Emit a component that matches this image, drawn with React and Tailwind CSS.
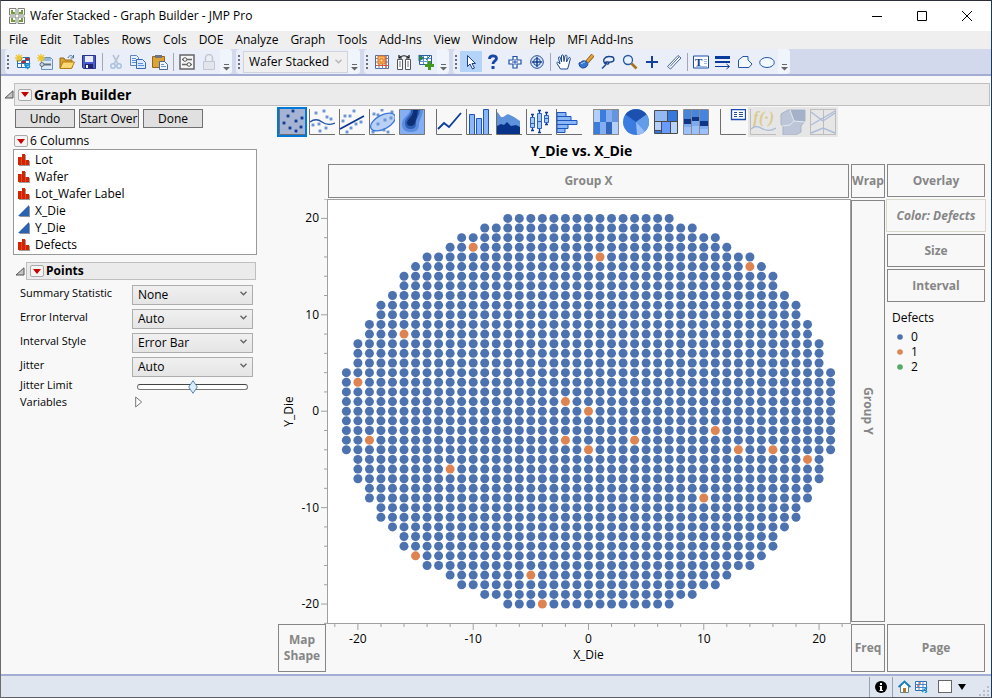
import React, { useState } from 'react';

const menus = ['File', 'Edit', 'Tables', 'Rows', 'Cols', 'DOE', 'Analyze', 'Graph', 'Tools', 'Add-Ins', 'View', 'Window', 'Help', 'MFI Add-Ins'];

const columns = [
  { name: 'Lot', type: 'nominal' },
  { name: 'Wafer', type: 'nominal' },
  { name: 'Lot_Wafer Label', type: 'nominal' },
  { name: 'X_Die', type: 'continuous' },
  { name: 'Y_Die', type: 'continuous' },
  { name: 'Defects', type: 'nominal' },
];

const pointOptions = [
  { id: 'summary', label: 'Summary Statistic', values: ['None', 'Mean', 'Median'] },
  { id: 'error', label: 'Error Interval', values: ['Auto', 'None', 'Range'] },
  { id: 'style', label: 'Interval Style', values: ['Error Bar', 'Band'] },
  { id: 'jitter', label: 'Jitter', values: ['Auto', 'None'] },
];

const legend = [
  { value: '0', color: '#4c72b0' },
  { value: '1', color: '#dd8452' },
  { value: '2', color: '#55a868' },
];

// Highest die row for each |X_Die|, the wafer is symmetric
const extents = [20, 20, 20, 20, 20, 20, 20, 20, 19, 19, 18, 18, 17, 16, 16, 15, 14, 12, 11, 9, 7, 4];

const defects = new Set([
  '-10,17', '1,16', '14,15', '-16,8', '-20,3', '-2,1', '0,0', '-19,-3', '-2,-3', '0,-4',
  '4,-3', '11,-2', '13,-4', '16,-4', '19,-5', '-12,-6', '10,-9', '-15,-15', '-5,-17', '-4,-20',
]);

const dies = [];
for (let x = -21; x <= 21; x++) {
  const top = extents[Math.abs(x)];
  for (let y = -top; y <= top; y++) {
    dies.push({ x, y, color: defects.has(`${x},${y}`) ? '#dd8452' : '#4c72b0' });
  }
}

const xPos = (v) => `${((v + 22.68) / 45.45) * 100}%`;
const yPos = (v) => `${((22.01 - v) / 44.08) * 100}%`;
const ticks = Array.from({ length: 23 }, (_, i) => i * 2 - 22);

/* ---------- small icons ---------- */

const Svg = ({ size = 16, children }) => (
  <svg width={size} height={size} viewBox={`0 0 ${size} ${size}`} fill="none" aria-hidden="true">
    {children}
  </svg>
);

const RedTriangle = ({ label }) => (
  <button aria-label={label} className="flex h-3 w-[14px] shrink-0 items-center justify-center rounded-[2px] border border-[#a9a9a9] bg-[#f4f4f4]">
    <svg width="8" height="5" viewBox="0 0 8 5" aria-hidden="true">
      <path d="M0 0h8L4 5z" fill="#c80000" />
    </svg>
  </button>
);

const Disclosure = () => (
  <svg width="10" height="9" viewBox="0 0 10 9" aria-hidden="true">
    <path d="M9 .8V8H1z" fill="#c4c4c4" stroke="#555" />
  </svg>
);

const NominalIcon = () => (
  <svg width="13" height="12" viewBox="0 0 13 12" aria-hidden="true">
    <path d="M1 4h3V1h4v6h4v5H1z" fill="#a09a98" />
    <path d="M0 3h4v8H0zM4 0h3v11H4zM7 6h4v5H7z" fill="#d42300" />
    <path d="M3.500 3v8M7.500 6v5" stroke="#e8663f" strokeWidth=".6" />
  </svg>
);

const ContinuousIcon = () => (
  <svg width="13" height="12" viewBox="0 0 13 12" aria-hidden="true">
    <path d="M12 1v11H1z" fill="#8f9499" />
    <path d="M11 0v11H0z" fill="#2a62b4" />
  </svg>
);

const Chevron = () => (
  <svg width="7" height="5" viewBox="0 0 7 5" fill="none" stroke="currentColor" aria-hidden="true">
    <path d="M.5 .8l3 3 3-3" strokeWidth="1.4" />
  </svg>
);

const Star = () => <path d="M4 0v8M0 4h8M1 1l6 6M7 1L1 7" stroke="#f0c52e" strokeWidth="1.3" />;

const Logo = () => (
  <Svg size={16}>
    <path d="M.5 .5h6.500v6.500H.5zM9 .5h6.500v6.500H9zM.5 9H7v6.500H.5zM9 9h6.500v6.500H9z" fill="#fff" stroke="#7d8078" />
    <path d="M2 2h2v2h2v2H2zM12 2h2v4h-4V4h2zM2 10h2v2h2v2H2zM12 10h2v4h-4v-2h2z" fill="#6ea13c" />
  </Svg>
);

const icons = {
  newTable: (
    <Svg>
      <path d="M2.500 3.500h12v10h-12z" fill="#fff" stroke="#2d6fb3" />
      <path d="M3 6.500h12M3 9.500h12M6.500 3v10M10.500 3v10" stroke="#2d6fb3" />
      <path d="M7 7h3v2H7zM11 4h3v2h-3z" fill="#c22" />
      <path d="M10 14l5-5M12 15l3-3M9 11h6" stroke="#1696d2" strokeWidth="1.500" />
      <Star />
    </Svg>
  ),
  newScript: (
    <Svg>
      <path d="M4.500 3.500h9l2 2v10h-11z" fill="#dfeaf8" stroke="#6d8fb5" />
      <path d="M5 4h9v3H5z" fill="#94b8dd" />
      <path d="M5 10.500h9" stroke="#5f7182" strokeWidth="2" />
      <circle cx="5" cy="10.500" r="2" fill="#c7d2de" stroke="#5f7182" />
      <Star />
    </Svg>
  ),
  open: (
    <Svg>
      <path d="M1 14V4h4l1 2h7v8z" fill="#d9a233" stroke="#9a6c12" />
      <path d="M1 14.500L4 8h11.500l-3 6.500z" fill="#ffd872" stroke="#b07c16" />
      <path d="M9 4c1-3 4-3 5-1M14.500 1v3h-3" stroke="#4a6f9c" />
    </Svg>
  ),
  save: (
    <Svg>
      <path d="M1.500 1.500h13v13h-12l-1-1z" fill="#4a5ad0" stroke="#273189" />
      <path d="M4 2h8v6H4z" fill="#e9ecfb" />
      <path d="M4 10h8v4H4z" fill="#1d2566" />
      <path d="M5 11h2v3H5z" fill="#fff" />
    </Svg>
  ),
  cut: (
    <Svg>
      <path d="M5 1l5 9M11 1l-5 9" stroke="#b9c4d6" strokeWidth="1.600" />
      <circle cx="5" cy="12" r="2.200" stroke="#a9bfe0" strokeWidth="1.500" />
      <circle cx="11" cy="12" r="2.200" stroke="#a9bfe0" strokeWidth="1.500" />
    </Svg>
  ),
  copy: (
    <Svg>
      <path d="M.5 1.500h6l2 2v8h-8z" fill="#e7f0fd" stroke="#5c83bd" />
      <path d="M6.500 5.500h6l3 3v6h-9z" fill="#dceafd" stroke="#3a69b4" />
      <path d="M2 4.500h4M2 6.500h4M2 8.500h4M8 9.500h5M8 11.500h6" stroke="#5c8fd8" />
    </Svg>
  ),
  paste: (
    <Svg>
      <path d="M.5 2.500h12v11H.5z" fill="#dca336" stroke="#95651a" />
      <path d="M3 1h7v3H3z" fill="#70747c" />
      <path d="M7.500 7.500h5l3 3v5h-8z" fill="#f2f7ff" stroke="#4a6796" />
      <path d="M9 10.500h3M9 12.500h5" stroke="#6c94cc" />
    </Svg>
  ),
  settings: (
    <Svg>
      <path d="M1 1h14v14H1z" fill="#f6f6f6" stroke="#666" strokeWidth="1.500" />
      <path d="M3 5.500h10M3 10.500h10" stroke="#666" strokeWidth="1.500" />
      <circle cx="6" cy="5.500" r="1.800" fill="#fff" stroke="#555" />
      <circle cx="10" cy="10.500" r="1.800" fill="#fff" stroke="#555" />
    </Svg>
  ),
  lock: (
    <Svg>
      <path d="M4.500 7V4a3.500 3.500 0 017 0v3" stroke="#c3c7ce" strokeWidth="1.500" />
      <path d="M2.500 7.500h11v8h-11z" fill="#e2e5eb" stroke="#c3c7ce" />
    </Svg>
  ),
  dataGrid: (
    <Svg>
      <path d="M1.500 1.500h13v13h-13z" fill="#fff" stroke="#4a6da7" />
      <path d="M2 4.500h13M2 8h13M2 11.500h13M5 1v14M8.500 1v14M12 1v14" stroke="#6b84b8" />
      <path d="M4 2h7v8H4z" fill="#ffb45c" stroke="#e0711a" />
      <path d="M6 5h3v3H6z" fill="#fff0c8" stroke="#e0711a" />
      <path d="M2 11.500h13M12 2v13" stroke="#cf5a3c" />
    </Svg>
  ),
  swapColumns: (
    <Svg>
      <path d="M1.500 5.500h5v10h-5zM9.500 5.500h5v10h-5z" fill="#fff" stroke="#555" />
      <path d="M3 8h2M3 10h2M3 12h2M11 8h2M11 10h2M11 12h2" stroke="#777" />
      <path d="M3 4c2-3 8-3 10 0M3 1v3h3M13 1v3h-3" stroke="#111" strokeWidth="1.200" />
    </Svg>
  ),
  addRows: (
    <Svg>
      <path d="M1.500 1.500h12v9h-12z" fill="#fff" stroke="#2f5f9a" />
      <path d="M2 4.500h11M2 7.500h11M5.500 2v8M9.500 2v8" stroke="#5c9bd5" />
      <path d="M1 1l5 3-5 3zM8 6l4-4" fill="#2c8a2c" stroke="#2c6a9a" />
      <path d="M11.500 7v9M7 11.500h9" stroke="#3f9a1e" strokeWidth="3" />
    </Svg>
  ),
  arrow: (
    <Svg>
      <path d="M4.500 1.500v11l2.500-2.500 2.500 5 2-1-2.500-4.500h3.500z" fill="#fff" stroke="#1b3f94" />
    </Svg>
  ),
  help: (
    <Svg>
      <path d="M4.500 5c0-4 7-4 7-.5 0 2.500-3.500 2.500-3.500 5.500" stroke="#1646a6" strokeWidth="2.800" />
      <path d="M6.500 12h3v3h-3z" fill="#1646a6" />
    </Svg>
  ),
  cross: (
    <Svg>
      <path d="M6 2.500h4V6h4v4h-4v4H6v-4H2V6h4z" fill="#fff" stroke="#1b4ea8" strokeWidth="1.200" />
      <path d="M8 5v6M5 8h6" stroke="#1b4ea8" />
    </Svg>
  ),
  target: (
    <Svg>
      <circle cx="8" cy="8" r="6.300" fill="#dcebfc" stroke="#1b4591" />
      <circle cx="8" cy="8" r="3.500" stroke="#1b4591" />
      <path d="M8 3v4M8 9v4M3 8h4M9 8h4" stroke="#1b4591" strokeWidth="1.500" />
      <path d="M7 7h2v2H7z" fill="#1b4591" />
    </Svg>
  ),
  hand: (
    <Svg>
      <path d="M4.500 15L1 9.500c-.5-1.500 1-2 2-.5L4 10 2.500 4c0-1.500 1.500-1.500 2 0l1 4L5.500 2c.2-1.500 1.800-1.500 2 0l.5 5.500L9 2c.5-1.500 2-1 2 .5L10.500 8 12.500 4c.8-1.200 2-.5 1.800.8L12.500 12l-1 3z" fill="#fff" stroke="#1b4591" />
    </Svg>
  ),
  brush: (
    <Svg>
      <path d="M15 1L9 8" stroke="#8a5a14" strokeWidth="4" />
      <path d="M15 1L9 8" stroke="#e6a53a" strokeWidth="2.400" />
      <path d="M1 9c2 0 3-3 6-2s4 4 1 6-7 1-7-4z" fill="#3578d4" stroke="#163f8c" />
      <path d="M3 9.500c2 0 2-1.500 4-1.500" stroke="#b5d5fb" />
    </Svg>
  ),
  lasso: (
    <Svg>
      <path d="M5.500 10C1.500 6 5 2 10 2.500c5 0 5 5 1 5.500-3 .5-6-1-5 1s3 1 3-.5M6 10.500L2 14.500" stroke="#17428f" strokeWidth="1.400" />
    </Svg>
  ),
  zoom: (
    <Svg>
      <circle cx="6" cy="6" r="4.500" fill="#e6f2ff" stroke="#2857a4" strokeWidth="1.300" />
      <path d="M9.500 9.500l5 5" stroke="#a9741c" strokeWidth="2.600" />
    </Svg>
  ),
  plus: (
    <Svg>
      <path d="M8 2v12M2 8h12" stroke="#12429b" strokeWidth="2" />
    </Svg>
  ),
  ruler: (
    <Svg>
      <path d="M1.500 12.500l10.500-11 3 2.500-10.500 11z" fill="#fff" stroke="#48649c" />
      <path d="M4 12.500l9-9.500" stroke="#48649c" />
    </Svg>
  ),
  annotate: (
    <Svg>
      <path d="M.5 2h15v12H.5z" fill="#fff" stroke="#1b4ea8" />
      <text x="2" y="12" fontSize="11" fontWeight="bold" fontFamily="Liberation Serif, serif" fill="#123a8c">T</text>
      <path d="M11 5.500h3M11 7.500h3M11 9.500h3M3 12.500h11" stroke="#9dbbe4" />
    </Svg>
  ),
  lines: (
    <Svg>
      <path d="M0 3.500h15" stroke="#063a9c" strokeWidth="3" />
      <path d="M0 8h15" stroke="#063a9c" strokeWidth="2" />
      <path d="M0 12.500h14M11.500 10l3 2.500-3 2.500" stroke="#063a9c" />
    </Svg>
  ),
  polygon: (
    <Svg>
      <path d="M1.500 13.500V6L6 2.500h5V6l4 4-3 3.500z" fill="#f4f9ff" stroke="#2458ad" />
    </Svg>
  ),
  oval: (
    <Svg>
      <ellipse cx="8" cy="8.500" rx="7.300" ry="5" fill="#f2f8ff" stroke="#2458ad" />
    </Svg>
  ),
};

/* ---------- chart type icons (26 x 26) ---------- */

const Frame = () => <path d="M.5 0v25.500H26" stroke="#6e6e6e" />;

const Dots = ({ at, fill = '#8fb2ea', edge = '#5a86cf' }) =>
  at.map(([x, y]) => <rect key={`${x}-${y}`} x={x} y={y} width="2" height="2" fill={fill} stroke={edge} strokeWidth=".8" />);

const chartIcons = [
  [
    { id: 'Points', art: <><Frame /><Dots fill="#1d49a8" edge="#0d368f" at={[[13, 1], [8, 6], [22, 8], [4, 13], [16, 11], [21, 17], [10, 18], [16, 21]]} /></> },
    { id: 'Smoother', art: <><Frame /><Dots at={[[6, 3], [14, 1], [17, 7], [21, 9], [3, 15], [9, 14], [16, 18], [10, 21]]} /><path d="M1 13c4-3 8-3 12 0s8 3 13 1" stroke="#1d4fa8" strokeWidth="1.300" /></> },
    { id: 'Line of Fit', art: <><Frame /><Dots at={[[14, 1], [5, 6], [10, 6], [3, 11], [16, 14], [21, 12], [11, 18], [7, 22]]} /><path d="M1 20L25 7" stroke="#0b3590" strokeWidth="1.700" /></> },
    { id: 'Ellipse', art: <><Frame /><Dots at={[[12, 0], [4, 4], [8, 5], [3, 22], [14, 20], [18, 22], [22, 2]]} /><ellipse cx="14" cy="13" rx="13.500" ry="7" transform="rotate(-28 14 13)" fill="#a9c7f5" fillOpacity=".8" stroke="#3c78d8" strokeWidth="1.300" /><Dots at={[[15, 10], [8, 14], [21, 8]]} /></> },
    { id: 'Contour', art: <><path d="M.5 .5h25v25H.5z" fill="#86aef2" stroke="#777" /><path d="M11 1c0 5-8 7-8 14s5 8 9 8c7 0 8-4 8-8s3-5 4-14z" fill="#5b8ce0" /><path d="M12 1c1 5-6 8-6 13s3 6 6 6c5 0 5-4 5-7s3-5 4-12z" fill="#2d5eb3" /><path d="M14 1c1 6-6 9-6 13s7 4 8 0 2-5 3-13z" fill="#0e2f73" /></> },
  ],
  [
    { id: 'Line', art: <><Frame /><path d="M2 20l6-6 5 4L25 4" stroke="#0d3b9c" strokeWidth="1.800" /></> },
    { id: 'Bar', art: <><Frame /><path d="M3.500 25V5.500h5V25M10.500 25V9.500h5V25M17.500 25V.5h5V25" fill="#8cb6fa" stroke="#1d55bd" /></> },
    { id: 'Area', art: <><path d="M1 3c3 2 3 6 6 5s4-4 7-2l4 2 6 4v13H1z" fill="#5e93dc" /><path d="M1 17l4-2 3 1 3-3 4 4 5-1 4 2v7H1z" fill="#08338a" /><Frame /></> },
    { id: 'Box Plot', art: <><Frame /><path d="M6.500 5v17M13.500 1v23M20.500 3v13M5 5.500h3M5 21.500h3M12 1.500h3M12 23.500h3M19 3.500h3M19 15.500h3" stroke="#0d3b9c" strokeWidth="1.300" /><path d="M4.500 8.500h4v10h-4zM11.500 4.500h4v15h-4zM18.500 6.500h4v7h-4z" fill="#a8c8fb" stroke="#2c62c4" /><path d="M5 14.500h3M12 12.500h3M19 9.500h3" stroke="#2c62c4" /></> },
    { id: 'Histogram', art: <><Frame /><path d="M1 3.500h9v4H1zM1 7.500h14v4H1zM1 11.500h20v4H1zM1 15.500h11v4H1zM1 19.500h8v4H1z" fill="#8cb6fa" stroke="#1d55bd" /></> },
  ],
  [
    { id: 'Heatmap', art: <><path d="M0 0h26v26H0z" fill="#86adf0" /><path d="M1 1h6v12H1zM19 13h6v12h-6z" fill="#b3d0fc" /><path d="M7 1h6v12H7zM1 13h6v12H1z" fill="#3a7ddd" /><path d="M13 13h6v12h-6z" fill="#3366bd" /><path d="M19 1h6v12h-6z" fill="#6594e0" /><path d="M.5 .5h25v25H.5z" stroke="#8a8a8a" /></> },
    { id: 'Pie', art: <><circle cx="13" cy="13" r="13" fill="#3a7ce0" /><path d="M13 13L2.500 5.500A13 13 0 0123.500 5.500z" fill="#1d51b0" /><path d="M13 13l10.500-7.500A13 13 0 0122 22.500z" fill="#629ee8" /><path d="M13 13l9 9.500a13 13 0 01-8 3.400z" fill="#98bdfb" /></> },
    { id: 'Treemap', art: <><path d="M1.500 1.500h13v11h-13z" fill="#93b8f4" /><path d="M14.500 1.500h10v11h-10z" fill="#3577dd" /><path d="M1.500 12.500h7v9h-7z" fill="#b6d0fb" /><path d="M8.500 12.500h9v12h-9z" fill="#699bff" /><path d="M17.500 12.500h7v12h-7z" fill="#b6d4fd" /><path d="M1.500 21.500h7v3h-7z" fill="#3577dd" /><path d="M1.500 1.500h23v23h-23zM1.500 12.500h23M14.500 1.500v11M8.500 12.500v12M17.500 12.500v12M1.500 21.500h7" stroke="#4a4a4a" /></> },
    { id: 'Mosaic', art: <><path d="M1 1h24v24H1z" fill="#9cc0fa" /><path d="M1 1h8v9H1zM9 1h8v7H9zM17 1h8v11h-8z" fill="#4784de" /><path d="M1 10h8v5H1zM9 8h8v4H9zM17 12h8v5h-8z" fill="#0d3488" /><path d="M1 15h8v3H1zM9 12h8v5H9zM17 17h8v3h-8z" fill="#7daaf0" /><path d="M.5 .5h25v25H.5zM8.500 1v24M16.500 1v24" stroke="#8a8a8a" /></> },
  ],
  [
    { id: 'Caption Box', art: <><Frame /><path d="M11.500 .5h14v10h-14z" fill="#fff" stroke="#1d49b0" strokeWidth="1.300" /><path d="M14 3.500h3M19 3.500h4M14 5.500h3M19 5.500h4M14 7.500h3M19 7.500h4" stroke="#2a4f9c" /></> },
    { id: 'Formula', off: true, art: <><path d="M.5 0v25.500H26" stroke="#bdbdbd" /><text x="3" y="14" fontSize="17" fontStyle="italic" fontWeight="bold" fontFamily="Liberation Serif, serif" fill="#dccb93">f(·)</text><path d="M1 20c5-4 8-2 12 0s8 2 13-1" stroke="#a9b9d8" strokeWidth="1.300" /></> },
    { id: 'Map Shapes', off: true, art: <><path d="M1 5l7-4h17v11l-4 5v6l-5 3H3v-8l-2-3z" fill="#bcc6d8" stroke="#a9b4c6" /><path d="M10 1h15v12l-11-1z" fill="#a5b1c9" /><path d="M2 17l8-1 4-4 11 1M14 12L10 1" stroke="#e4e8ee" /></> },
    { id: 'Parallel', off: true, art: <><path d="M.5 .5v25M25.500 .5v25M13.500 .5v25M0 .5h26M0 25.500h26" stroke="#bdbdbd" /><path d="M1 3l12 9 12-8M1 16l12-7 12-7M1 24l12-5 12 5" stroke="#adbbd8" strokeWidth="1.400" /></> },
  ],
];

/* ---------- toolbar ---------- */

const Overflow = () => (
  <button aria-label="More tools" className="ml-auto flex h-full w-3 items-end justify-center rounded-r bg-[#f0f4fb] pb-[3px]">
    <svg width="7" height="7" viewBox="0 0 7 7" aria-hidden="true">
      <path d="M1 0h5v1H1zM0 3h7L3.500 6.500z" fill="#666" />
    </svg>
  </button>
);

const Band = ({ children }) => (
  <div className="flex h-[25px] items-center rounded bg-[#e9eef8]">
    <svg width="7" height="16" viewBox="0 0 7 16" className="shrink-0" aria-hidden="true">
      <path d="M2 1h2v2H2zM2 5h2v2H2zM2 9h2v2H2zM2 13h2v2H2z" fill="#6b6f7a" />
    </svg>
    {children}
  </div>
);

const Tools = ({ names, selected }) =>
  names.map((name, i) =>
    name === '|' ? (
      <span key={i} className="mx-0.5 h-[18px] w-px bg-[#a3a7b5]" />
    ) : (
      <button
        key={i}
        aria-label={name}
        className={`flex h-[21px] w-[22px] shrink-0 items-center justify-center ${name === selected ? 'bg-[#b3d3f8]' : ''}`}
      >
        {icons[name]}
      </button>
    )
  );

const DropZone = ({ children, className = '' }) => (
  <button className={`flex items-center justify-center border border-[#868686] bg-[#f8f8f8] text-[12px] leading-4 font-bold text-[#868686] ${className}`}>
    {children}
  </button>
);

/* ---------- panels ---------- */

const ControlPanel = () => {
  const [jitter, setJitter] = useState(50);

  return (
    <aside className="w-[256px] shrink-0 pt-0.5 pl-3">
      <div className="flex gap-1 pl-0.5">
        {['Undo', 'Start Over', 'Done'].map((label) => (
          <button key={label} className="h-[19px] w-[60px] border border-[#707070] bg-[#e0e0e0] leading-4 whitespace-nowrap">
            {label}
          </button>
        ))}
      </div>

      <div className="mt-[5px] flex h-4 items-center gap-0.5 pl-px">
        <RedTriangle label="Columns menu" />
        <span>6 Columns</span>
      </div>
      <ul className="h-[106px] border border-[#999] bg-white pt-px pl-1">
        {columns.map((col) => (
          <li key={col.name} className="flex h-[17px] items-center gap-1">
            {col.type === 'nominal' ? <NominalIcon /> : <ContinuousIcon />}
            {col.name}
          </li>
        ))}
      </ul>

      <div className="mt-[7px] flex items-center gap-px pr-px pl-0.5">
        <Disclosure />
        <h2 className="flex h-[18px] flex-1 items-center gap-0.5 border border-[#bfbfbf] bg-[#ebebeb] pl-[3px] font-bold">
          <RedTriangle label="Points menu" />
          Points
        </h2>
      </div>

      <div className="mt-[3px] pr-1 pl-[7px] text-[11px]">
        {pointOptions.map((opt) => (
          <div key={opt.id} className="flex h-6 justify-between">
            <label htmlFor={opt.id} className="leading-5">{opt.label}</label>
            <div className="relative mt-0.5 h-5 w-[121px]">
              <select id={opt.id} className="h-5 w-full appearance-none border border-[#adadad] bg-linear-to-b from-[#f0f0f0] to-[#e5e5e5] pl-[5px] text-[12px] leading-4">
                {opt.values.map((v) => (
                  <option key={v}>{v}</option>
                ))}
              </select>
              <span className="pointer-events-none absolute top-1.5 right-1.5 flex text-[#666]">
                <Chevron />
              </span>
            </div>
          </div>
        ))}
        <div className="flex h-[15px] justify-between">
          <label htmlFor="limit" className="leading-3">Jitter Limit</label>
          <div className="relative mr-[5px] flex w-[111px] items-center">
            <input
              id="limit"
              type="range"
              value={jitter}
              onChange={(e) => setJitter(Number(e.target.value))}
              className="h-1.5 w-full appearance-none rounded-full border border-[#777] border-t-[#444] bg-white [&::-webkit-slider-thumb]:opacity-0"
            />
            <svg width="10" height="14" viewBox="0 0 10 14" className="pointer-events-none absolute -translate-x-1/2" style={{ left: `${jitter}%` }} aria-hidden="true">
              <path d="M5 .7L9.300 7 5 13.300.7 7z" fill="#dcecfb" stroke="#5b86b4" />
            </svg>
          </div>
        </div>
        <div className="flex h-4 items-center">
          <span className="w-[115px]">Variables</span>
          <button aria-label="Show variables">
            <svg width="8" height="12" viewBox="0 0 8 12" aria-hidden="true">
              <path d="M.7 1v10L6.700 6z" fill="#fff" stroke="#777" />
            </svg>
          </button>
        </div>
      </div>
    </aside>
  );
};

const YAxis = () => (
  <svg className="h-full w-full text-[12px]" aria-label="Y_Die axis">
    {ticks.map((t) => (
      <g key={t}>
        <line x1={t % 10 === 0 ? 43 : 46} x2="49" y1={yPos(t)} y2={yPos(t)} stroke="#a0a0a0" />
        {t % 10 === 0 && <text x="41" y={yPos(t)} dy="4" textAnchor="end">{t}</text>}
      </g>
    ))}
    <svg x="15" y="50%" overflow="visible">
      <text transform="rotate(-90)" textAnchor="middle" className="text-[12px]">Y_Die</text>
    </svg>
  </svg>
);

const Plot = () => (
  <svg className="h-full w-full bg-white" aria-label="Y_Die vs. X_Die">
    {dies.map((d) => (
      <circle key={`${d.x},${d.y}`} cx={xPos(d.x)} cy={yPos(d.y)} r="4.500" fill={d.color} />
    ))}
    <rect width="100%" height="100%" fill="none" stroke="#a0a0a0" strokeWidth="2" />
  </svg>
);

const XAxis = () => (
  <svg className="h-full w-full text-[12px]" aria-label="X_Die axis">
    {ticks.map((t) => (
      <g key={t}>
        <line x1={xPos(t)} x2={xPos(t)} y1="0" y2={t % 10 === 0 ? 6 : 3} stroke="#a0a0a0" />
        {t % 10 === 0 && <text x={xPos(t)} y="19" textAnchor="middle">{t}</text>}
      </g>
    ))}
    <text x={xPos(0)} y="35" textAnchor="middle">X_Die</text>
  </svg>
);

const GraphPanel = () => {
  const [chart, setChart] = useState('Points');

  return (
    <section className="ml-5 flex min-w-0 flex-1 flex-col pr-[5px] pb-0.5">
      <div className="flex gap-[7px]">
        {chartIcons.map((group, i) => (
          <div key={i} className="flex">
            {group.map((item) => (
              <button
                key={item.id}
                aria-label={item.id}
                disabled={item.off}
                onClick={() => setChart(item.id)}
                className={`flex h-[30px] w-[30px] items-center justify-center ${
                  item.id === chart ? 'border-2 border-[#0078d7] bg-[#a6b4d4]' : item.off ? 'bg-[#e6e6e6]' : ''
                }`}
              >
                <Svg size={26}>{item.art}</Svg>
              </button>
            ))}
          </div>
        ))}
      </div>

      <h2 className="pr-[100px] text-center text-[14px] leading-[27px] font-bold">Y_Die vs. X_Die</h2>

      <div className="ml-px grid flex-1 grid-cols-[49px_1fr_34px_101px] grid-rows-[35px_1fr_48px]">
        <DropZone className="col-start-2 mr-0.5 mb-px ml-px">Group X</DropZone>
        <DropZone className="mb-px">Wrap</DropZone>

        <div className="row-span-2 flex flex-col gap-0.5 pr-px pl-0.5">
          <DropZone className="h-[33px]">Overlay</DropZone>
          <DropZone className="-mx-px h-[33px] border-[#d6d9cb] italic">Color: Defects</DropZone>
          <DropZone className="h-[33px]">Size</DropZone>
          <DropZone className="h-[33px]">Interval</DropZone>
          <div className="mt-[5px] pl-[5px]">
            <div className="leading-[18px]">Defects</div>
            <ul className="mt-0.5 pl-[5px] leading-[15px]">
              {legend.map((item) => (
                <li key={item.value} className="flex h-[15px] items-center gap-2">
                  <svg width="6" height="6" aria-hidden="true">
                    <circle cx="3" cy="3" r="2.800" fill={item.color} />
                  </svg>
                  {item.value}
                </li>
              ))}
            </ul>
          </div>
        </div>

        <YAxis />
        <Plot />
        <DropZone className="mt-px mb-0.5">
          <span className="[writing-mode:vertical-rl]">Group Y</span>
        </DropZone>

        <DropZone className="mr-px">Map Shape</DropZone>
        <XAxis />
        <DropZone>Freq</DropZone>
        <DropZone className="mr-px ml-0.5">Page</DropZone>
      </div>
    </section>
  );
};

const StatusBar = () => (
  <footer className="flex h-[23px] items-center justify-end border-t-2 border-[#a3add4] bg-[#dfe6f0]">
    <span className="h-5 w-px bg-[#9aa0b5]" />
    <button aria-label="Information" className="flex w-[22px] justify-center">
      <svg width="12" height="12" viewBox="0 0 12 12" aria-hidden="true">
        <circle cx="6" cy="6" r="6" fill="#000" />
        <path d="M5 2h2v2H5zM4.500 5H7v4h1v1H4.500V9H5V6h-.5z" fill="#fff" />
      </svg>
    </button>
    <span className="h-5 w-px bg-[#9aa0b5]" />
    <button aria-label="Home window" className="ml-[5px]">
      <svg width="13" height="13" viewBox="0 0 13 13" aria-hidden="true">
        <path d="M2.500 6v6.500h8V6l-4-4z" fill="#fff" stroke="#5a8a8a" />
        <path d="M.5 7l6-5.500 6 5.500" fill="none" stroke="#1c80b8" strokeWidth="1.800" />
        <path d="M5 8h3v4.500H5z" fill="#b5792c" />
      </svg>
    </button>
    <button aria-label="Data table" className="mr-2.5 ml-1">
      <svg width="13" height="12" viewBox="0 0 13 12" aria-hidden="true">
        <path d="M.5 .5h11v9H.5z" fill="#fff" stroke="#2d6fb3" />
        <path d="M.5 3.500h11M.5 6.500h11M4 .5v9M8 .5v9" stroke="#4b86c4" />
        <path d="M4 2h2M2 5h2" stroke="#c22" />
        <path d="M7 11l5-5M10 12l2-2" stroke="#1696d2" strokeWidth="1.500" />
      </svg>
    </button>
    <input type="checkbox" aria-label="Row state" className="h-[13px] w-[14px] appearance-none border border-[#666] bg-white" />
    <button aria-label="Arrange menu" className="mr-[13px] ml-1.5">
      <svg width="8" height="6" viewBox="0 0 8 6" aria-hidden="true">
        <path d="M0 0h8L4 6z" fill="#000" />
      </svg>
    </button>
    <svg width="11" height="11" viewBox="0 0 11 11" className="mr-px self-end" aria-hidden="true">
      <path d="M8 0h2v2H8zM8 4h2v2H8zM4 4h2v2H4zM8 8h2v2H8zM4 8h2v2H4zM0 8h2v2H0z" fill="#b8bfcc" />
    </svg>
  </footer>
);

const App = () => {
  return (
    <div className="flex min-h-screen flex-col border border-t-[#2b2d38] border-r-[#1b3a57] border-b-[#5c5f66] border-l-[#6b6b6b] bg-[#f8f8f8] font-['Open_Sans','Noto_Sans',sans-serif] text-[12px] leading-4 text-black">
      {/* Title bar */}
      <header className="flex h-[30px] items-center bg-white pr-px pl-2">
        <Logo />
        <h1 className="ml-[5px] flex-1">Wafer Stacked - Graph Builder - JMP Pro</h1>
        <button aria-label="Minimize" className="flex h-full w-[45px] items-center justify-center">
          <svg width="10" height="10" stroke="#000" aria-hidden="true"><path d="M0 5.500h10" /></svg>
        </button>
        <button aria-label="Maximize" className="flex h-full w-[45px] items-center justify-center">
          <svg width="10" height="10" stroke="#000" fill="none" aria-hidden="true"><path d="M.5 .5h9v9h-9z" /></svg>
        </button>
        <button aria-label="Close" className="flex h-full w-[46px] items-center justify-center">
          <svg width="10" height="10" stroke="#000" aria-hidden="true"><path d="M0 0l10 10M10 0L0 10" /></svg>
        </button>
      </header>

      {/* Menu bar */}
      <nav className="flex h-[18px] items-center gap-3 bg-[#efefef] pl-2">
        {menus.map((m) => (
          <button key={m} className="whitespace-nowrap">{m}</button>
        ))}
      </nav>

      {/* Toolbars */}
      <div className="flex h-[27px] gap-1 border-b-2 border-[#a3add4] bg-[#d3d9ec] pl-1">
        <Band>
          <Tools names={['newTable', 'newScript', 'open', 'save', '|', 'cut', 'copy', 'paste', '|', 'settings', 'lock']} />
          <Overflow />
        </Band>
        <Band>
          <div className="relative h-[22px] w-[105px]">
            <select aria-label="Data table" className="h-[22px] w-full appearance-none border border-[#d0d3da] bg-[#f0f0f0] pl-[5px]">
              <option>Wafer Stacked</option>
            </select>
            <span className="pointer-events-none absolute top-2 right-1.5 flex text-[#b5b5b5]">
              <Chevron />
            </span>
          </div>
          <Overflow />
        </Band>
        <Band>
          <Tools names={['dataGrid', 'swapColumns', 'addRows']} />
          <Overflow />
        </Band>
        <Band>
          <Tools
            selected="arrow"
            names={['arrow', 'help', 'cross', 'target', '|', 'hand', 'brush', 'lasso', 'zoom', 'plus', 'ruler', '|', 'annotate', 'lines', 'polygon', 'oval']}
          />
          <Overflow />
        </Band>
      </div>

      {/* Outline title */}
      <div className="mt-[7px] mb-px flex h-[23px] items-center pl-[3px]">
        <Disclosure />
        <h2 className="mr-px flex h-[23px] flex-1 items-center gap-0.5 border border-[#bfbfbf] bg-[#ebebeb] pl-[3px] text-[14px] font-bold">
          <RedTriangle label="Graph Builder menu" />
          Graph Builder
        </h2>
      </div>

      <main className="flex flex-1">
        <ControlPanel />
        <GraphPanel />
      </main>

      <StatusBar />
    </div>
  );
};

export default App;
